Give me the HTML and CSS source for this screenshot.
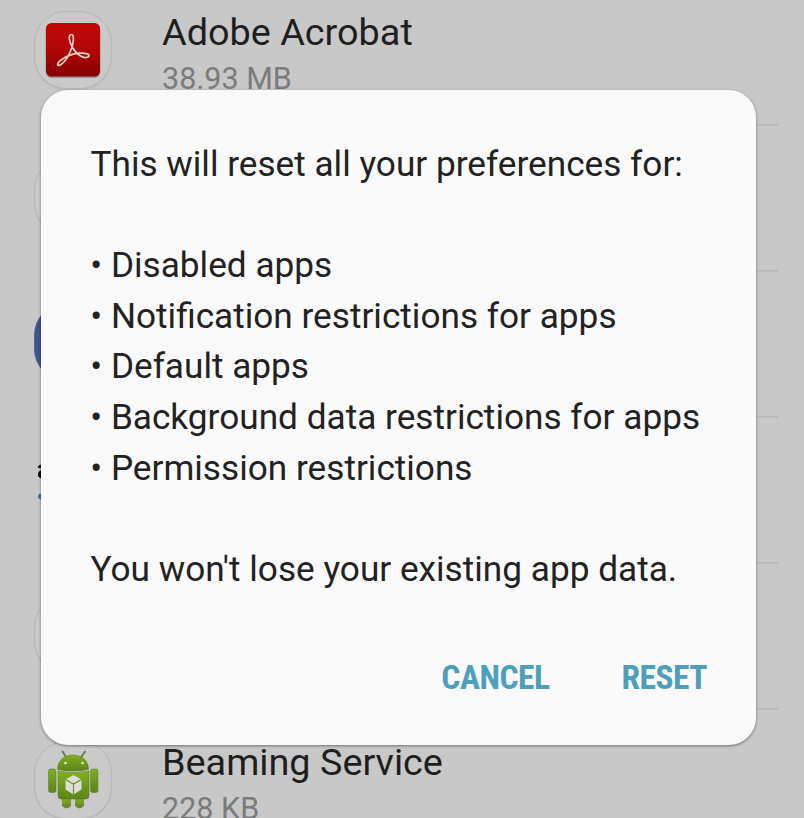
FILE: index.html
```html
<!DOCTYPE html>
<html lang="en">
<head>
<meta charset="utf-8">
<title>Reset app preferences</title>
<link rel="stylesheet" href="styles.css">
</head>
<body>
<main class="screen">
  <ul class="apps">
    <li class="app">
      <span class="tile">
        <svg viewBox="0 0 78 78" width="78" height="78">
          <defs><linearGradient id="red" x1="0" y1="0" x2="0" y2="1"><stop offset="0" stop-color="#c30606"/><stop offset=".5" stop-color="#b20505"/><stop offset="1" stop-color="#850204"/></linearGradient></defs>
          <rect x="11.500" y="13" width="55" height="54" rx="6" fill="#777" opacity=".6"/>
          <rect x="12" y="12" width="54" height="53.500" rx="5.500" fill="url(#red)"/>
          <path d="M37.500 23.500c-3.600 0-2.500 7 .7 12.500 4.500 8 11.500 12 15.800 10 3.700-2.500-2.500-4.500-9-3.800-7 .8-13.500 3.500-17.500 6.500-5.500 4-4.500 7-1.200 5.200 4.200-2.400 9-10 11.500-17.200 2.100-6.200 2.300-13.200-.3-13.200z" fill="none" stroke="#efcfc8" stroke-width="1.700"/>
        </svg>
      </span>
      <div class="info"><div class="name">Adobe Acrobat</div><div class="size">38.93 MB</div></div>
    </li>
    <li class="app"><span class="tile"></span></li>
    <li class="app"><span class="tile tile-blue"></span></li>
    <li class="app"><span class="tile tile-plain">
      <svg viewBox="0 0 78 78" width="78" height="78"><path d="M5 19c1-3 8-3 8 0v10M12 22c-8-1-8 6-4 6 3 0 4-2 4-4" fill="none" stroke="#080808" stroke-width="3"/><path d="M6.500 47.500q30 18 60 0" fill="none" stroke="#267f9e" stroke-width="5" stroke-linecap="round"/></svg>
    </span></li>
    <li class="app"><span class="tile"></span></li>
    <li class="app">
      <span class="tile">
        <svg viewBox="0 0 78 78" width="78" height="78">
          <defs><linearGradient id="green" x1="0" y1="0" x2="0" y2="1"><stop offset="0" stop-color="#82ae20"/><stop offset="1" stop-color="#5b8519"/></linearGradient></defs>
          <path d="M28.500 10.500l4 6M51 10.500l-4 6" stroke="#667d3a" stroke-width="1.800" stroke-linecap="round"/>
          <g fill="url(#green)" stroke="#577528" stroke-width=".5">
            <path d="M23.500 28.500c0-8 6-14.500 15.500-14.500s15.500 6.500 15.500 14.500q-15.500 3-31 0z"/>
            <path d="M24 30q15 3 31 0v25q0 3-3 3H27q-3 0-3-3z"/>
            <rect x="14.500" y="28" width="7.500" height="23.500" rx="2"/>
            <rect x="56.500" y="28" width="7.500" height="23.500" rx="2"/>
            <path d="M28.500 58h8v7q-4 4-8 0zM41.500 58h8v7q-4 4-8 0z"/>
          </g>
          <g fill="#e4f3c4"><circle cx="31.500" cy="22" r="1.300"/><circle cx="48.500" cy="22" r="1.300"/></g>
          <path d="M39.500 34l8 4.500v10l-8 5-8-5v-10z" fill="#dcded7"/>
          <path d="M31.500 38.500l8 4.500 8-4.500M39.500 43v10.500" fill="none" stroke="#6a8d33" stroke-width="1.200"/>
        </svg>
      </span>
      <div class="info"><div class="name">Beaming Service</div><div class="size">228 KB</div></div>
    </li>
  </ul>
  <section class="dialog" role="dialog">
    <div class="message">
      <p>This will reset all your preferences for:</p>
      <ul class="bullets">
        <li>Disabled apps</li>
        <li>Notification restrictions for apps</li>
        <li>Default apps</li>
        <li>Background data restrictions for apps</li>
        <li>Permission restrictions</li>
      </ul>
      <p>You won't lose your existing app data.</p>
    </div>
    <div class="actions">
      <button>CANCEL</button>
      <button>RESET</button>
    </div>
  </section>
</main>
</body>
</html>
```
FILE: styles.css
```css
* { box-sizing: border-box; }
body { margin: 0; font-family: Roboto, sans-serif; }
ul, p { margin: 0; padding: 0; list-style: none; }
.screen { position: relative; width: 804px; height: 818px; overflow: hidden; background: #c8c8c8; }
.apps { padding-top: 1px; margin-top: -23px; }
.app { display: flex; height: 146px; margin-right: 26px; padding: 33px 0 0 34px; }
.app + .app { background: linear-gradient(#b7b7b7, #b7b7b7) 140px 0 / 100% 1.500px no-repeat; }
.tile { flex: none; width: 78px; height: 78px; border: 1.500px solid #b7b7b7; border-radius: 32px; background: #cacaca; box-shadow: 0 1px 1px #b9b9b9; }
.tile svg { display: block; margin: -1px; }
.tile-blue { background: #40558d; border-color: #526391; }
.tile-plain { border-color: transparent; background: none; box-shadow: none; }
.info { margin-left: 50px; white-space: nowrap; }
.name { font-size: 37.800px; line-height: 46px; margin-top: -2px; color: #1e1e1e; }
.size { font-size: 30.500px; line-height: 40px; margin-top: 4px; color: #7b7b7b; }
.dialog { position: absolute; left: 41px; top: 90px; width: 715px; height: 655px; padding: 49px 49px 0 49.500px; border-radius: 27px; background: #fafafa; box-shadow: 0 1px 3px rgba(0,0,0,.45); }
.message { font-size: 35.200px; line-height: 50.600px; color: #222; white-space: nowrap; }
.bullets { margin: 50.600px 0; }
.bullets li { display: flex; }
.bullets li::before { content: "•"; flex: none; width: 20.700px; margin-left: -.3px; }
.actions { display: flex; justify-content: flex-end; gap: 72px; margin-top: 64px; }
.actions button { padding: 0; border: 0; background: none; color: #4e9fbc; font: bold 33.500px/40px Roboto, sans-serif; font-stretch: 75%; letter-spacing: -.5px; }
```
